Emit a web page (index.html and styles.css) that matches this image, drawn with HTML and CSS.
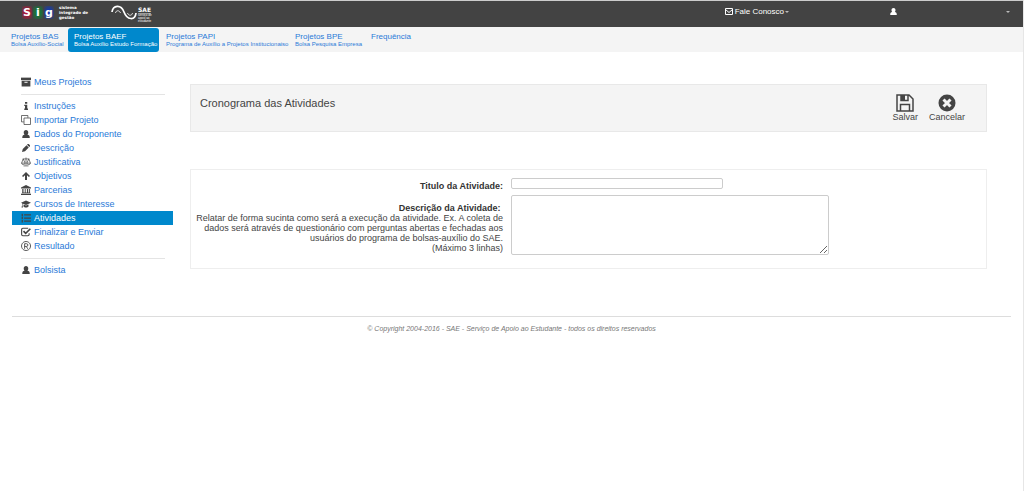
FILE: index.html
```html
<!DOCTYPE html>
<html lang="pt-BR">
<head>
<meta charset="utf-8">
<title>SIG - Cronograma das Atividades</title>
<link rel="stylesheet" href="styles.css">
</head>
<body>
<svg class="defs" aria-hidden="true">
  <symbol id="user" viewBox="0 0 16 16"><path d="M8 0c2.800 0 4.600 2 4.600 4.800 0 2-.6 3.600-1.600 4.600 3 .3 4.500 2 4.500 6.600H.5C.5 11.400 2 9.700 5 9.400c-1-1-1.600-2.600-1.600-4.600C3.400 2 5.200 0 8 0z"/></symbol>
</svg>
<header class="topbar">
  <a class="logo-sig" href="#" aria-label="SIG">
    <span class="sig-letters"><b class="red">S</b><b class="green">i</b><b class="blue">g</b></span>
    <span class="sig-name">sistema<br>integrado de<br>gestão</span>
  </a>
  <a class="logo-sae" href="#">
    <svg class="wave" viewBox="0 0 26 16"><path d="M1 7C2 0 10-1 13 7s11 9 12 1" fill="none" stroke="#fff" stroke-width="1.700"/><path d="M4.500 8c.5-3 4-3 5 0M16.500 8c1 3 4.500 3 5 0" fill="none" stroke="#ddd" stroke-width="1"/></svg>
    <span class="sae-text"><b>SAE</b><small>serviço de<br>apoio ao<br>estudante</small></span>
  </a>
  <nav class="topmenu">
    <button class="topbtn"><svg class="mail" viewBox="0 0 16 14"><path d="M1 1h14v12H1zM1 3l7 6 7-6" fill="none" stroke="currentColor" stroke-width="2"/></svg>Fale Conosco<i class="caret"></i></button>
    <button class="topbtn account" aria-label="Usuário"><svg class="person"><use href="#user"/></svg><i class="caret"></i></button>
  </nav>
</header>
<nav class="tabs">
  <a class="tab" href="#">Projetos BAS<small>Bolsa Auxílio-Social</small></a>
  <a class="tab current" href="#">Projetos BAEF<small>Bolsa Auxílio Estudo Formação</small></a>
  <a class="tab" href="#">Projetos PAPI<small>Programa de Auxílio a Projetos Institucionaiso</small></a>
  <a class="tab" href="#">Projetos BPE<small>Bolsa Pesquisa Empresa</small></a>
  <a class="tab" href="#">Frequência</a>
</nav>
<div class="layout">
  <nav class="sidebar">
    <a class="item" href="#"><svg class="icon" viewBox="0 0 16 16"><path d="M0 1h16v4H0z"/><path fill-rule="evenodd" d="M1 6h14v9H1zM5.500 7.500v1.500h5V7.500z"/></svg>Meus Projetos</a>
    <hr class="rule">
    <a class="item" href="#"><svg class="icon small" viewBox="0 0 16 16"><path d="M6 0h4.500v3.500H6zM4.500 5.500h6V13H12v3H4.500v-3H6V8H4.500z"/></svg>Instruções</a>
    <a class="item" href="#"><svg class="icon" viewBox="0 0 16 16"><path d="M4.500 11H.8V.8H11v3.700M4.800 4.800h10.400v10.400H4.800z" fill="none" stroke="currentColor" stroke-width="1.200"/></svg>Importar Projeto</a>
    <a class="item" href="#"><svg class="icon small"><use href="#user"/></svg>Dados do Proponente</a>
    <a class="item" href="#"><svg class="icon small" viewBox="0 0 16 16"><path d="M0 16l1.500-6L9 2.500 13.500 7 6 14.500zM10 1.500L11.500 0h2L16 2.500v2L14.500 6z"/></svg>Descrição</a>
    <a class="item" href="#"><svg class="icon" viewBox="0 0 18 16"><path d="M9 0v14M4.500 15h9M3 2.500h12M4 2.500L1 10h6.500zM14 2.500L10.500 10H17zM1 10c0 3.500 6.500 3.500 6.500 0M10.500 10c0 3.500 6.500 3.500 6.500 0" fill="none" stroke="currentColor" stroke-width="1.300"/></svg>Justificativa</a>
    <a class="item" href="#"><svg class="icon small" viewBox="0 0 16 16"><path d="M8 0l8 8-2.200 2.200L10 6.500V16H6V6.500l-3.800 3.700L0 8z"/></svg>Objetivos</a>
    <a class="item" href="#"><svg class="icon" viewBox="0 0 16 16"><path d="M8 0l8 4v1.500H0V4zM2 6.500h2V12h2V6.500h1.500V12h2V6.500h2V12H13V6.500h1.500V12l.5 1H1l1-1zM0 14h16v2H0z"/></svg>Parcerias</a>
    <a class="item" href="#"><svg class="icon" viewBox="0 0 20 16"><path d="M10 1l10 4.500-10 4.500L3 6.900V11l1 4H1l1-4V6.400L0 5.500zM5 9l5 2.200L15 9v4c-2 2.500-8 2.500-10 0z"/></svg>Cursos de Interesse</a>
    <a class="item selected" href="#" aria-current="page"><svg class="icon" viewBox="0 0 16 16"><path d="M5 2h11v2H5zM5 7h11v2H5zM5 12h11v2H5zM1 1h2v4H1zM1 6h2v4H1zM1 11h2v4H1z"/></svg>Atividades</a>
    <a class="item" href="#"><svg class="icon" viewBox="0 0 16 16"><path d="M11.500 2H3a2 2 0 0 0-2 2v8a2 2 0 0 0 2 2h8a2 2 0 0 0 2-2v-2" fill="none" stroke="currentColor" stroke-width="1.800"/><path d="M4 6.500L7.500 10 15 2.800" fill="none" stroke="currentColor" stroke-width="2.600"/></svg>Finalizar e Enviar</a>
    <a class="item" href="#"><svg class="icon" viewBox="0 0 16 16"><path d="M8 .8a7.200 7.200 0 1 0 .1 0zM5.800 12.500V4.300h3a2.200 2.200 0 0 1 0 4.400h-3M8.500 8.700L10.800 12.500" fill="none" stroke="currentColor" stroke-width="1.400"/></svg>Resultado</a>
    <hr class="rule">
    <a class="item" href="#"><svg class="icon small"><use href="#user"/></svg>Bolsista</a>
  </nav>
  <main class="content">
    <form>
      <section class="heading">
        <h1>Cronograma das Atividades</h1>
        <div class="actions">
          <button class="action" type="button"><svg viewBox="0 0 18 18"><path d="M1 1h12l4 4v12H1zM4.500 17v-6.500h9V17M5 1v5.500h7V1" fill="none" stroke="currentColor" stroke-width="1.500"/><path d="M5 1h4v5H5z"/></svg>Salvar</button>
          <button class="action" type="button"><svg viewBox="0 0 18 18"><circle cx="9" cy="9" r="8.500"/><path d="M5.500 5.500l7 7M12.500 5.500l-7 7" stroke="#f4f4f4" stroke-width="3"/></svg>Cancelar</button>
        </div>
      </section>
      <section class="panel">
        <label class="caption" for="titulo"><b>Titulo da Atividade:</b></label>
        <input class="field title-field" id="titulo" type="text">
        <label class="caption help" for="descricao"><b>Descrição da Atividade:&nbsp;</b><br>Relatar de forma sucinta como será a execução da atividade. Ex. A coleta de<br>dados será através de questionário com perguntas abertas e fechadas aos<br>usuários do programa de bolsas-auxílio do SAE.<br>(Máximo 3 linhas)</label>
        <textarea class="field text-field" id="descricao"></textarea>
      </section>
    </form>
  </main>
</div>
<footer class="footer">© Copyright 2004-2016 - SAE - Serviço de Apoio ao Estudante - todos os direitos reservados</footer>
</body>
</html>
```
FILE: styles.css
```css
* { box-sizing: border-box; }
html { min-height: 100%; border-right: 1px solid #e6e6e6; }
body { margin: 0; background: #fff; color: #444; font: 9px/10px "Liberation Sans", Arial, sans-serif; }
a { color: #2a7ad8; text-decoration: none; }
button { border: 0; padding: 0; background: none; color: inherit; font: inherit; cursor: pointer; }
svg { fill: currentColor; flex: none; }
.defs { display: none; }

.topbar { display: flex; align-items: flex-start; height: 27px; padding: 4px 13px 0 22px; border-top: 1px solid #ccc; background: #434343; color: #fff; }
.topbar a { color: #fff; }
.logo-sig { display: flex; align-items: center; gap: 5px; width: 89px; }
.sig-letters { display: flex; gap: 1px; font: bold 11px/13px "DejaVu Sans", sans-serif; }
.sig-letters b { width: 10px; height: 13px; text-align: center; }
.red { background: radial-gradient(#b0183a 30%, #434343); }
.green { background: radial-gradient(#147a38 30%, #434343); }
.blue { background: radial-gradient(#163cb0 30%, #434343); }
.sig-name { font: bold 4px/5px "DejaVu Sans", sans-serif; white-space: nowrap; }
.logo-sae { display: flex; gap: 1px; }
.wave { width: 26px; height: 16px; }
.sae-text { padding-top: 1px; }
.sae-text b { display: block; width: 13px; font: bold 6px/7px "DejaVu Sans", sans-serif; border-bottom: 1px solid #999; }
.sae-text small { display: block; font-size: 3px; line-height: 3px; }
.topmenu { display: flex; margin-left: auto; gap: 101px; }
.topbtn { display: flex; align-items: center; font-size: 8px; line-height: 13px; white-space: nowrap; }
.mail { width: 8px; height: 7px; margin-right: 2px; }
.person { width: 7px; height: 7px; }
.account { width: 120px; justify-content: space-between; }
.caret { margin-left: 1px; border: 2px solid transparent; border-top-color: #bbb; border-bottom: 0; }

.tabs { display: grid; grid-template-columns: 62px 91px 128px 75px auto; gap: 1px; justify-content: start; height: 25px; padding: 1px 5px 0; background: #f4f4f4; }
.tab { height: 24px; padding: 4px 6px; border-radius: 3px; font-size: 8px; line-height: 9px; white-space: nowrap; }
.tab small { display: block; font-size: 6px; line-height: 6px; }
.tab.current { background: #0088cc; color: #fff; }

.layout { display: grid; grid-template-columns: 161px 1fr; gap: 17px; padding: 23px 36px 0 12px; }
.item { display: flex; align-items: center; gap: 3px; height: 14px; padding-left: 9px; white-space: nowrap; }
.icon { width: 10px; height: 10px; color: #444; }
.icon.small { height: 8px; }
.item.selected { background: #0088cc; color: #fff; }
.rule { height: 1px; margin: 5px 8px 4px 9px; border: 0; background: #e4e4e4; }

.heading { display: flex; justify-content: space-between; height: 48px; margin-top: 9px; padding: 9px 21px 0 9px; border: 1px solid #e8e8e8; background: #f4f4f4; }
h1 { margin: 3px 0 0; font-size: 11px; line-height: 13px; font-weight: normal; }
.actions { display: flex; align-items: flex-start; gap: 11px; }
.action { display: flex; flex-direction: column; align-items: center; line-height: 11px; }
.action svg { width: 18px; height: 18px; }

.panel { display: grid; grid-template-columns: 312px 1fr; column-gap: 8px; row-gap: 4px; margin-top: 37px; padding: 8px 157px 13px 0; border: 1px solid #eee; }
.caption { text-align: right; white-space: nowrap; padding-top: 3px; }
.caption b { color: #333; }
.help { padding-top: 8px; }
.field { border: 1px solid #ccc; border-radius: 2px; background: #fff; font: inherit; }
.title-field { width: 212px; height: 11px; padding: 0 2px; }
.text-field { width: 100%; height: 60px; padding: 2px; resize: vertical; }

.footer { margin: 39px 12px 0; padding-top: 7px; border-top: 1px solid #ddd; color: #777; font-size: 7px; font-style: italic; text-align: center; }
```
